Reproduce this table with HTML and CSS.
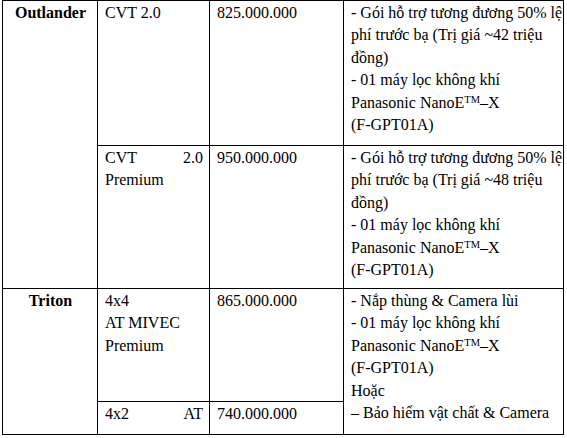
FILE: index.html
```html
<!DOCTYPE html>
<html lang="vi">
<head>
<meta charset="utf-8">
<title>Bảng giá</title>
<link rel="stylesheet" href="styles.css">
</head>
<body>
<table class="price">
  <colgroup>
    <col class="c-model">
    <col class="c-ver">
    <col class="c-price">
    <col class="c-gift">
  </colgroup>
  <tr class="r1">
    <td class="model" rowspan="2">Outlander</td>
    <td class="ver">CVT 2.0</td>
    <td>825.000.000</td>
    <td class="gift">- Gói hỗ trợ tương đương 50% lệ<br>phí trước bạ (Trị giá ~42 triệu<br>đồng)<br>- 01 máy lọc không khí<br>Panasonic NanoE<sup>TM</sup>–X<br>(F-GPT01A)</td>
  </tr>
  <tr class="r2">
    <td class="ver">CVT 2.0 Premium</td>
    <td>950.000.000</td>
    <td class="gift">- Gói hỗ trợ tương đương 50% lệ<br>phí trước bạ (Trị giá ~48 triệu<br>đồng)<br>- 01 máy lọc không khí<br>Panasonic NanoE<sup>TM</sup>–X<br>(F-GPT01A)</td>
  </tr>
  <tr class="r3">
    <td class="model" rowspan="2">Triton</td>
    <td class="ver">4x4<br>AT MIVEC<br>Premium</td>
    <td>865.000.000</td>
    <td class="gift" rowspan="2">- Nắp thùng &amp; Camera lùi<br>- 01 máy lọc không khí<br>Panasonic NanoE<sup>TM</sup>–X<br>(F-GPT01A)<br>Hoặc<br>– Bảo hiểm vật chất &amp; Camera</td>
  </tr>
  <tr class="r4">
    <td class="ver spread">4x2 AT</td>
    <td>740.000.000</td>
  </tr>
</table>
</body>
</html>
```

FILE: styles.css
```css
html, body {
  margin: 0;
  padding: 0;
  background: #ffffff;
}

body {
  font-family: "Liberation Serif", "Times New Roman", serif;
  font-size: 16px;
  line-height: 22.4px;
  color: #000000;
}

.price {
  border-collapse: collapse;
  table-layout: fixed;
  width: 561px;
  margin-left: 2px;
}

.c-model { width: 95px; }
.c-ver { width: 112px; }
.c-price { width: 134px; }
.c-gift { width: 220px; }

.price td {
  border: 1px solid #000000;
  vertical-align: top;
  padding: 1px 6px 0 7px;
}

.r1 { height: 145px; }
.r2 { height: 143px; }
.r3 { height: 113px; }
.r4 { height: 33px; }

.model {
  font-weight: bold;
  text-align: center;
}

.ver {
  text-align: justify;
}

.spread {
  text-align-last: justify;
}

.gift {
  white-space: nowrap;
}

sup {
  font-size: 10.5px;
  line-height: 0;
  vertical-align: 5px;
}
```
